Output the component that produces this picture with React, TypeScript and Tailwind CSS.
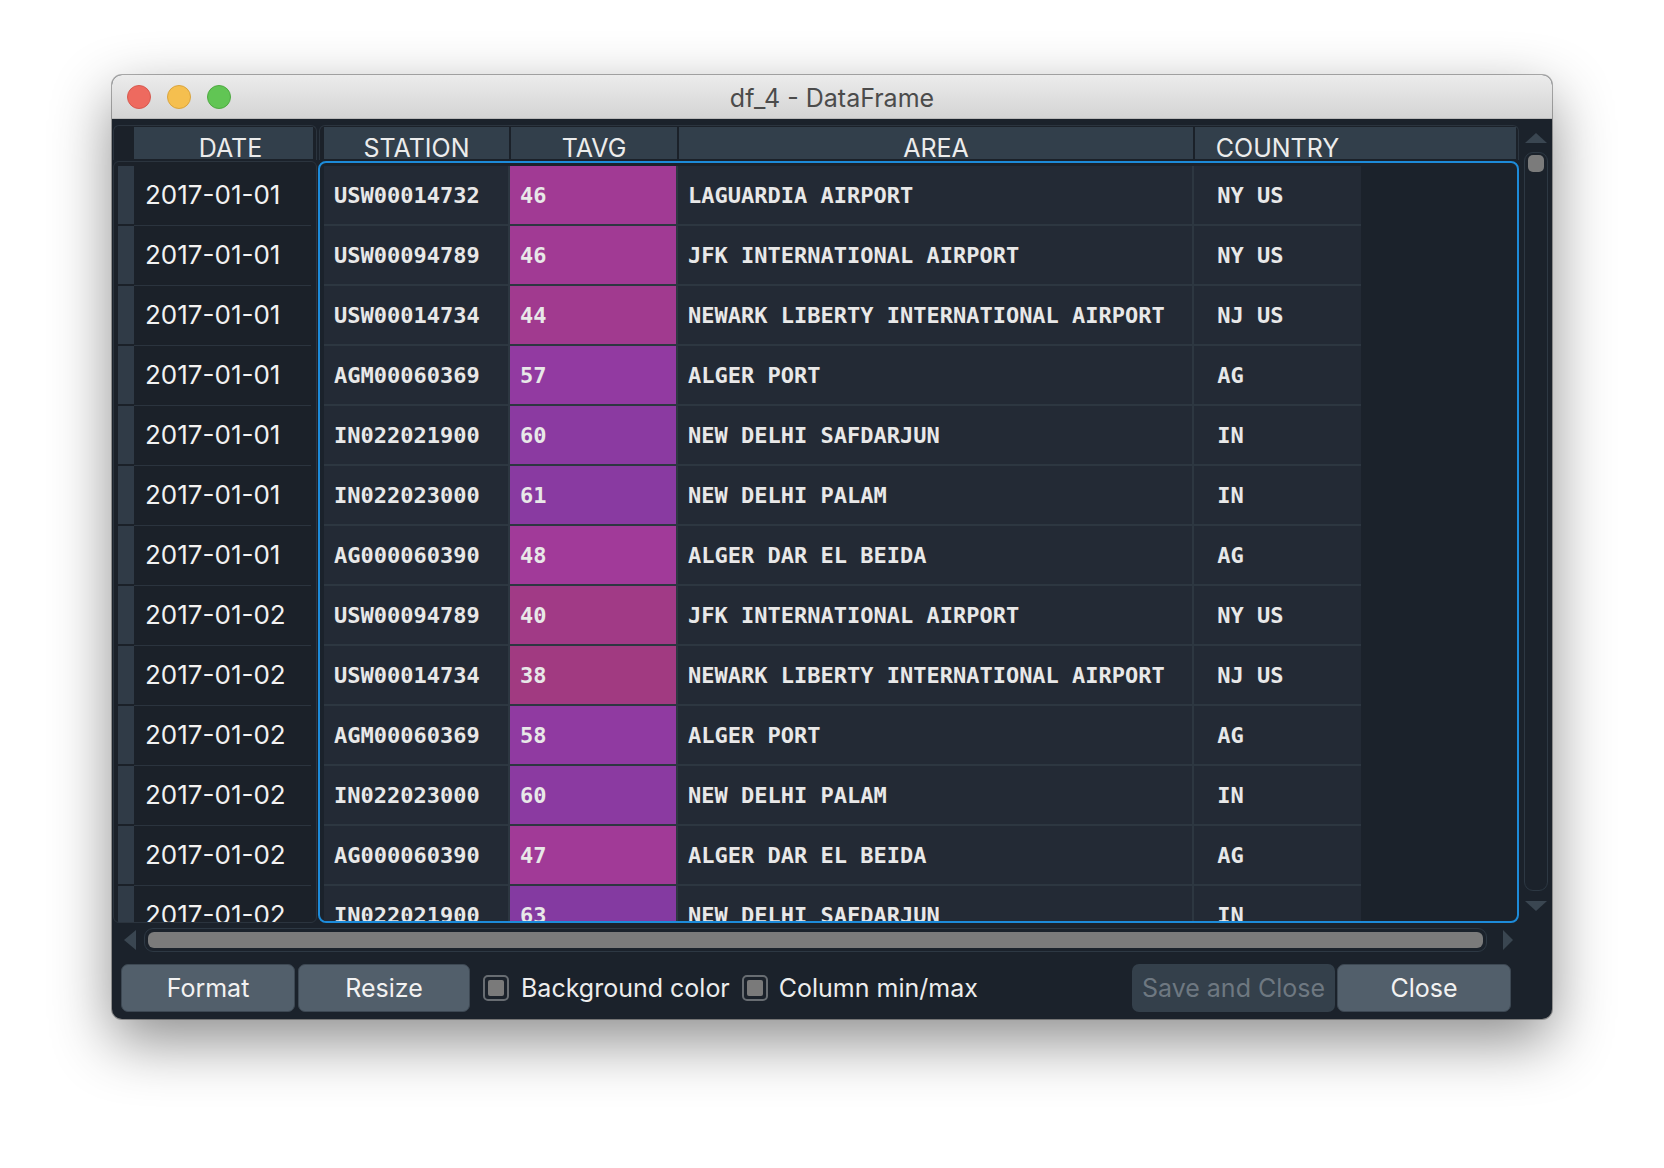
import React from "react";

type Row = { date: string; station: string; tavg: number; area: string; country: string };

const rows: Row[] = [
  { date: "2017-01-01", station: "USW00014732", tavg: 46, area: "LAGUARDIA AIRPORT", country: " NY US" },
  { date: "2017-01-01", station: "USW00094789", tavg: 46, area: "JFK INTERNATIONAL AIRPORT", country: " NY US" },
  { date: "2017-01-01", station: "USW00014734", tavg: 44, area: "NEWARK LIBERTY INTERNATIONAL AIRPORT", country: " NJ US" },
  { date: "2017-01-01", station: "AGM00060369", tavg: 57, area: "ALGER PORT", country: " AG" },
  { date: "2017-01-01", station: "IN022021900", tavg: 60, area: "NEW DELHI SAFDARJUN", country: " IN" },
  { date: "2017-01-01", station: "IN022023000", tavg: 61, area: "NEW DELHI PALAM", country: " IN" },
  { date: "2017-01-01", station: "AG000060390", tavg: 48, area: "ALGER DAR EL BEIDA", country: " AG" },
  { date: "2017-01-02", station: "USW00094789", tavg: 40, area: "JFK INTERNATIONAL AIRPORT", country: " NY US" },
  { date: "2017-01-02", station: "USW00014734", tavg: 38, area: "NEWARK LIBERTY INTERNATIONAL AIRPORT", country: " NJ US" },
  { date: "2017-01-02", station: "AGM00060369", tavg: 58, area: "ALGER PORT", country: " AG" },
  { date: "2017-01-02", station: "IN022023000", tavg: 60, area: "NEW DELHI PALAM", country: " IN" },
  { date: "2017-01-02", station: "AG000060390", tavg: 47, area: "ALGER DAR EL BEIDA", country: " AG" },
  { date: "2017-01-02", station: "IN022021900", tavg: 63, area: "NEW DELHI SAFDARJUN", country: " IN" },
];

// heat colour: colder rows lean red, warmer rows lean violet
function tavgColor(v: number) {
  const hue = 319 - (v - 38) * 1.45;
  return `hsl(${hue} 47% 43%)`;
}

const cell = "flex items-center pl-[10px] bg-[#232a35] whitespace-pre";
const head = "h-[32px] bg-[#323f4b] flex justify-center pt-[9px] leading-[25px]";

function Checkbox() {
  return (
    <div className="w-[26px] h-[26px] rounded-[5px] border-2 border-[#686d72] p-[3px]">
      <div className="w-full h-full rounded-[2px] bg-[#7a7a7a]" />
    </div>
  );
}

export default function App() {
  return (
    <div className="min-h-[1168px] w-full bg-white pl-[112px] pt-[75px] font-['Inter',sans-serif]">
      <div className="w-[1440px] h-[944px] rounded-[10px] overflow-hidden flex flex-col bg-[#1b222b] ring-1 ring-black/30 shadow-[0_22px_60px_rgba(0,0,0,0.45)]">
        {/* title bar */}
        <div className="h-[44px] grid grid-cols-[1fr_auto_1fr] items-center bg-gradient-to-b from-[#ececec] to-[#d4d4d4] border-b border-[#b9b9b9]">
          <div className="flex items-center gap-[16px] pl-[15px]">
            <span className="w-[24px] h-[24px] rounded-full bg-[#ee6a5f] border border-[#d65a50]" />
            <span className="w-[24px] h-[24px] rounded-full bg-[#f5bf4f] border border-[#d9a43e]" />
            <span className="w-[24px] h-[24px] rounded-full bg-[#61c554] border border-[#4fa942]" />
          </div>
          <div className="pt-[5px] text-[25px] text-[#4b4b4b]">df_4 - DataFrame</div>
          <div />
        </div>

        {/* body */}
        <div className="flex-1 flex flex-col pl-[1px] pr-[4px] pb-[7px]">
          <div className="mt-[6px] h-[798px] flex">
            {/* index column */}
            <div className="w-[204px] flex flex-col">
              <div className="h-[35px] rounded-t-[6px] border border-b-0 border-[#2b343e] bg-[#1b2129] pl-[20px] pr-[3px] pt-[1px] text-[25px] text-[#ececec]">
                <div className={`${head} pl-[14px]`}>DATE</div>
              </div>
              <div className="mt-[1px] h-[762px] rounded-[6px] border border-[#2b343e] bg-[#1b2129] pl-[4px] pt-[4px] overflow-hidden">
                {rows.map((r, i) => (
                  <div key={i} className="flex h-[60px]">
                    <div className="w-[16px] h-[58px] bg-[#303b47]" />
                    <div className="flex-1 mr-[5px] h-[60px] pb-[2px] border-b border-[#2b343e] flex items-center pl-[11px] text-[26px] text-[#f2f2f2]">
                      {r.date}
                    </div>
                  </div>
                ))}
              </div>
            </div>

            {/* data columns */}
            <div className="ml-[1px] w-[1201px] flex flex-col">
              <div className="ml-[1px] h-[35px] rounded-t-[6px] border border-b-0 border-[#2b343e] bg-[#1b2129] pl-[4px] pr-[2px] pt-[1px] flex gap-[2px] text-[25px] text-[#ececec]">
                <div className={`${head} w-[185px]`}>STATION</div>
                <div className={`${head} w-[166px]`}>TAVG</div>
                <div className={`${head} w-[514px]`}>AREA</div>
                <div className={`${head} flex-1 !justify-start`}>
                  <div className="w-[165px] text-center">COUNTRY</div>
                </div>
              </div>
              <div className="mt-[1px] h-[762px] rounded-[8px] border-2 border-[#1d8bd9] bg-[#1b222b] pl-[4px] pt-[3px] overflow-hidden">
                <div className="w-[1037px] flex flex-col gap-[2px] bg-[#2d3741] font-['DejaVu_Sans_Mono',monospace] font-bold text-[22px] text-[#e8e8e8]">
                  {rows.map((r, i) => (
                    <div key={i} className="flex gap-[2px] h-[58px] shrink-0">
                      <div className={`${cell} w-[184px]`}>{r.station}</div>
                      <div className={`${cell} w-[166px]`} style={{ backgroundColor: tavgColor(r.tavg) }}>
                        {r.tavg}
                      </div>
                      <div className={`${cell} w-[514px]`}>{r.area}</div>
                      <div className={`${cell} w-[167px]`}>{r.country}</div>
                    </div>
                  ))}
                </div>
              </div>
            </div>

            {/* vertical scrollbar */}
            <div className="ml-[5px] w-[24px] flex flex-col items-center pt-[8px]">
              <svg width="22" height="10" viewBox="0 0 22 10">
                <polygon points="11,0 22,10 0,10" fill="#3a4651" />
              </svg>
              <div className="mt-[9px] h-[739px] w-[24px] rounded-[9px] border border-[#2d3843] p-[2px]">
                <div className="mx-auto w-[16px] h-[17px] rounded-[5px] bg-[#7b7b7b]" />
              </div>
              <svg className="mt-[10px]" width="22" height="10" viewBox="0 0 22 10">
                <polygon points="0,0 22,0 11,10" fill="#3a4651" />
              </svg>
            </div>
          </div>

          {/* horizontal scrollbar */}
          <div className="mt-[5px] h-[24px] flex items-center">
            <svg className="ml-[11px]" width="12" height="20" viewBox="0 0 12 20">
              <polygon points="12,0 12,20 0,10" fill="#3a4651" />
            </svg>
            <div className="ml-[8px] w-[1343px] h-[24px] rounded-[9px] border border-[#2d3843] p-[3px]">
              <div className="h-full rounded-[6px] bg-[#7b7b7b]" />
            </div>
            <svg className="ml-[16px]" width="10" height="20" viewBox="0 0 10 20">
              <polygon points="0,0 10,10 0,20" fill="#3a4651" />
            </svg>
          </div>

          {/* buttons */}
          <div className="mt-[12px] h-[48px] flex items-center pl-[8px] pr-[37px] text-[25px]">
            <button className="w-[174px] h-[48px] pt-[2px] rounded-[7px] bg-[#525f6b] border border-[#3d4853] text-[#f2f2f2]">
              Format
            </button>
            <button className="ml-[3px] w-[172px] h-[48px] pt-[2px] rounded-[7px] bg-[#525f6b] border border-[#3d4853] text-[#f2f2f2]">
              Resize
            </button>
            <div className="ml-[13px]">
              <Checkbox />
            </div>
            <span className="ml-[12px] pt-[2px] text-[#ededed]">Background color</span>
            <div className="ml-[12px]">
              <Checkbox />
            </div>
            <span className="ml-[11px] pt-[2px] text-[#ededed]">Column min/max</span>
            <button className="ml-auto w-[203px] h-[48px] pt-[2px] rounded-[7px] bg-[#34404b] text-[#6e7881]">
              Save and Close
            </button>
            <button className="ml-[2px] w-[174px] h-[48px] pt-[2px] rounded-[7px] bg-[#525f6b] border border-[#3d4853] text-[#f2f2f2]">
              Close
            </button>
          </div>
        </div>
      </div>
    </div>
  );
}
